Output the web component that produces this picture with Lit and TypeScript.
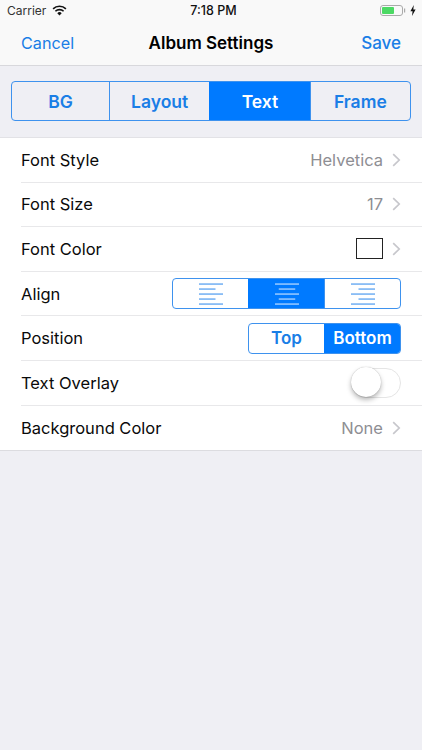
import { LitElement, html, css, svg } from "lit";
import { customElement } from "lit/decorators.js";

const chevron = html`<svg class="chev" width="9" height="14" viewBox="0 0 9 14"><path d="M1.2 1.2 L7.2 7 L1.2 12.8" fill="none" stroke="#c7c7cc" stroke-width="1.7"/></svg>`;

const alignIcon = (kind: "l" | "c" | "r", color: string) => {
  const short = 16.5;
  const x = kind === "l" ? 0 : kind === "c" ? (24 - short) / 2 : 24 - short;
  return html`<svg width="24" height="22" viewBox="0 0 24 22">
    ${[1, 11, 21].map((y) => svg`<rect x="0" y="${y - 0.5}" width="24" height="1.1" fill="${color}"/>`)}
    ${[6, 16].map((y) => svg`<rect x="${x}" y="${y - 0.5}" width="${short}" height="1.1" fill="${color}"/>`)}
  </svg>`;
};

@customElement("app-root")
export class AppRoot extends LitElement {
  static styles = css`
    :host {
      display: block;
      width: 422px;
      height: 750px;
      background: #efeff4;
      font-family: Inter, "Liberation Sans", Arial, sans-serif;
      overflow: hidden;
      color: #000;
    }
    .top { background: #f9f9f9; border-bottom: 1px solid #d8d8dc; }
    .status {
      height: 21px;
      display: grid;
      grid-template-columns: 1fr auto 1fr;
      align-items: center;
      padding: 0 6px 0 7px;
      font-size: 13px;
      color: #111;
    }
    .status .left { display: flex; align-items: center; gap: 6px; color: #333; font-size: 12px; }
    .status .time { font-weight: 500; font-size: 12.5px; padding-left: 4px; }
    .status .right { display: flex; justify-content: flex-end; align-items: center; gap: 4px; }
    .nav {
      height: 44px;
      display: grid;
      grid-template-columns: 1fr auto 1fr;
      align-items: center;
      padding: 0 21px;
      font-size: 16.2px;
    }
    .nav .blue { color: #1a7ee6; }
    .nav .save { text-align: right; font-weight: 500; font-size: 17px; }
    .nav .title { font-weight: 600; font-size: 17px; color: #000; }
    .segwrap { padding: 15px 11px 16px; }
    .seg {
      display: flex;
      border: 1.3px solid #3e92ee;
      border-radius: 4px;
      overflow: hidden;
      box-sizing: border-box;
      color: #1a7ee6;
      font-weight: 600;
    }
    .seg > div {
      display: flex;
      align-items: center;
      justify-content: center;
      flex: 1 1 0;
      border-left: 1.3px solid #3e92ee;
    }
    .seg > div:first-child { border-left: 0; }
    .seg > .on { background: #007aff; color: #fff; border-left-color: #007aff; }
    .main { height: 40px; font-size: 17.5px; }
    .main > div:first-child { flex: 0 0 97px; }
    .list { background: #fff; border-top: 1px solid #e2e2e6; border-bottom: 1px solid #dcdce0; }
    .row {
      height: 44.6px;
      box-sizing: border-box;
      margin-left: 21px;
      padding-right: 21px;
      display: flex;
      align-items: center;
      justify-content: space-between;
      font-size: 16.5px;
      border-bottom: 1px solid #e8e8ea;
      color: #0a0a0a;
    }
    .row:last-child { border-bottom: 0; }
    .val { display: flex; align-items: center; color: #8e8e93; }
    .chev { margin-left: 9px; display: block; }
    .swatch { width: 27px; height: 21px; border: 1.2px solid #222; box-sizing: border-box; }
    .align { width: 229px; height: 31px; }
    .pos { width: 153px; height: 31px; font-size: 17px; }
    .pos > div:first-child { flex: 0 0 75px; }
    .toggle {
      width: 50px;
      height: 30px;
      border-radius: 15px;
      border: 1.5px solid #e5e5e5;
      box-sizing: border-box;
      position: relative;
      background: #fff;
    }
    .knob {
      position: absolute;
      left: -1.5px;
      top: -1.5px;
      width: 30px;
      height: 30px;
      border-radius: 50%;
      background: #fff;
      box-shadow: 0 3px 5px rgba(0,0,0,0.28), 0 0 1px rgba(0,0,0,0.3);
    }
    .batt { display: block; }
  `;

  render() {
    return html`
      <div class="top">
        <div class="status">
          <div class="left">
            <span>Carrier</span>
            <svg width="15" height="11" viewBox="0 0 15 11">
              <path d="M7.5 10.5 L5.3 8.2 A3.1 3.1 0 0 1 9.7 8.2 Z" fill="#111"/>
              <path d="M3.4 6.3 A5.8 5.8 0 0 1 11.6 6.3" fill="none" stroke="#111" stroke-width="1.6"/>
              <path d="M1.1 3.9 A9 9 0 0 1 13.9 3.9" fill="none" stroke="#111" stroke-width="1.6"/>
            </svg>
          </div>
          <div class="time">7:18 PM</div>
          <div class="right">
            <svg class="batt" width="26" height="11" viewBox="0 0 26 11">
              <rect x="0.5" y="0.5" width="22" height="10" rx="2.5" fill="none" stroke="#aaa"/>
              <rect x="2" y="2" width="12" height="7" rx="1" fill="#4cd964"/>
              <rect x="24" y="3.5" width="1.2" height="4" fill="#aaa"/>
            </svg>
            <svg width="6" height="11" viewBox="0 0 6 11"><path d="M3.8 0 L0.4 6.2 H2.6 L2 11 L5.6 4.6 H3.3 Z" fill="#111"/></svg>
          </div>
        </div>
        <div class="nav">
          <div class="blue">Cancel</div>
          <div class="title">Album Settings</div>
          <div class="blue save">Save</div>
        </div>
      </div>
      <div class="segwrap">
        <div class="seg main">
          <div>BG</div><div>Layout</div><div class="on">Text</div><div>Frame</div>
        </div>
      </div>
      <div class="list">
        <div class="row"><span>Font Style</span><span class="val">Helvetica${chevron}</span></div>
        <div class="row"><span>Font Size</span><span class="val">17${chevron}</span></div>
        <div class="row"><span>Font Color</span><span class="val"><span class="swatch"></span>${chevron}</span></div>
        <div class="row"><span>Align</span>
          <div class="seg align">
            <div>${alignIcon("l", "#3e92ee")}</div>
            <div class="on">${alignIcon("c", "#cfe5ff")}</div>
            <div>${alignIcon("r", "#3e92ee")}</div>
          </div>
        </div>
        <div class="row"><span>Position</span>
          <div class="seg pos"><div>Top</div><div class="on">Bottom</div></div>
        </div>
        <div class="row"><span>Text Overlay</span>
          <div class="toggle"><div class="knob"></div></div>
        </div>
        <div class="row"><span>Background Color</span><span class="val">None${chevron}</span></div>
      </div>
    `;
  }
}
